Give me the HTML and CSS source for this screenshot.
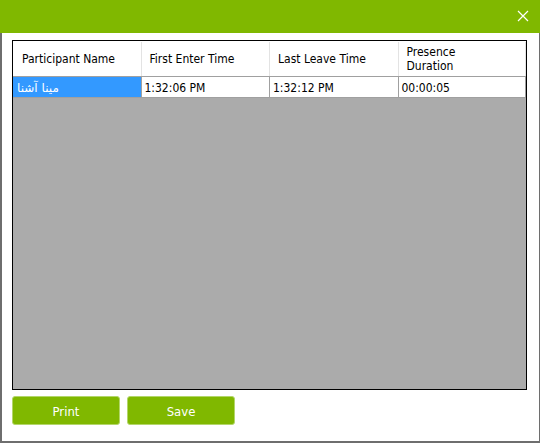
FILE: index.html
```html
<!DOCTYPE html>
<html>
<head>
<meta charset="utf-8">
<link rel="stylesheet" href="styles.css">
</head>
<body>
<div class="window">
  <div class="titlebar">
    <svg class="close" width="12" height="12" viewBox="0 0 12 12"><path d="M1 1 L11 11 M11 1 L1 11" stroke="#fff" stroke-width="1.2" fill="none"/></svg>
  </div>
  <div class="content">
    <div class="grid">
      <div class="row head">
        <div class="cell c1">Participant Name</div>
        <div class="cell">First Enter Time</div>
        <div class="cell">Last Leave Time</div>
        <div class="cell last">Presence<br>Duration</div>
      </div>
      <div class="row data">
        <div class="cell c1 sel"><span dir="rtl">مینا آشنا</span></div>
        <div class="cell">1:32:06 PM</div>
        <div class="cell">1:32:12 PM</div>
        <div class="cell last">00:00:05</div>
      </div>
      <div class="empty"></div>
    </div>
    <div class="buttons">
      <button class="btn">Print</button>
      <button class="btn">Save</button>
    </div>
  </div>
</div>
</body>
</html>
```
FILE: styles.css
```css
html, body { margin: 0; padding: 0; background: #fff; }
body { font-family: "DejaVu Sans Condensed", "DejaVu Sans", sans-serif; font-size: 12px; color: #000; }
.window {
  width: 540px; height: 443px; box-sizing: border-box;
  display: flex; flex-direction: column;
  border-left: 2px solid #6e6e6e; border-right: 1px solid #6e6e6e; border-bottom: 2px solid #6e6e6e;
}
.titlebar {
  height: 33px; background: #80b800; margin-left: -2px; margin-right: -1px;
  display: flex; justify-content: flex-end; align-items: center; padding-right: 11px; padding-bottom: 1px; box-sizing: border-box;
}
.close { display: block; }
.content { flex: 1; padding: 7px 12px 0 10px; display: flex; flex-direction: column; }
.grid {
  width: 515px; height: 350px; box-sizing: border-box; border: 1px solid #000;
  background: #ababab; display: flex; flex-direction: column;
}
.row { display: flex; background: #fff; width: 513px; }
.head { height: 36px; border-bottom: 1px solid #a0a0a0; box-sizing: border-box; padding-top: 1px; }
.head .cell { border-right: 1px solid #e3e3e3; padding-left: 8px; display: flex; align-items: center; line-height: 14px; }
.head .c1 { padding-left: 9px; }
.data { height: 21px; border-bottom: 1px solid #a0a0a0; box-sizing: border-box; }
.data .cell { border-right: 1px solid #a0a0a0; padding-left: 3px; padding-top: 2px; display: flex; align-items: center; }
.cell { width: 129px; box-sizing: border-box; white-space: nowrap; }
.cell.last { width: 128px; }
.data .sel { background: #3399ff; color: #fff; padding-left: 4px; font-family: "DejaVu Sans", sans-serif; }
.empty { flex: 1; }
.buttons { display: flex; gap: 7px; margin-top: 6px; }
.btn {
  width: 108px; height: 29px; background: #80b800; color: #fff;
  border: 1px solid #b3d66a; border-radius: 3px;
  font-family: "DejaVu Sans Condensed", "DejaVu Sans", sans-serif; font-size: 13px; padding: 0 0 0 0;
  padding-top: 1px;
}
```
